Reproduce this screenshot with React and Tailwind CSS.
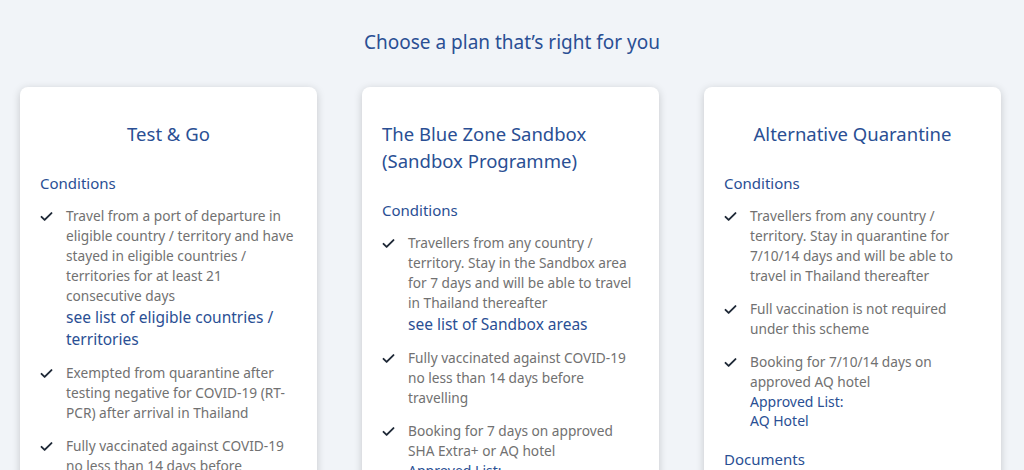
import React from "react";

const Check = () => (
  <svg viewBox="0 0 24 24" className="w-[15px] h-[15px] mt-[3px] shrink-0 -ml-[1px]" fill="none" stroke="#1f2937" strokeWidth="3" strokeLinecap="round" strokeLinejoin="round">
    <path d="M4 12.5l5 5L20 6.5" />
  </svg>
);

const Item = ({ children, link }) => (
  <li className="flex gap-[12px]">
    <Check />
    <div>
      <p className="text-[13.7px] leading-[20px] text-[#717171]">{children}</p>
      {link}
    </div>
  </li>
);

const Link = ({ children }) => (
  <a className="block text-[15.5px] leading-[22px] text-[#2a4f94]">{children}</a>
);

const Small = ({ children }) => (
  <a className="block text-[14px] leading-[19px] text-[#2a4f94]">{children}</a>
);

const Card = ({ title, left, children }) => (
  <div className="bg-white rounded-[8px] shadow-[0_2px_8px_rgba(0,0,0,0.18)] px-5 pt-[33px] pb-8 h-[420px]">
    <h3 className={`text-[18.5px] leading-[27px] text-[#2a4f94] ${left ? "text-left pr-10" : "text-center"}`}>{title}</h3>
    {children}
  </div>
);

const Heading = ({ children }) => (
  <h4 className="mt-[25px] text-[15px] leading-[22px] text-[#2a4f94]">{children}</h4>
);

export default function App() {
  return (
    <div className="w-[1024px] h-[470px] overflow-hidden bg-[#f1f4f8]" style={{ fontFamily: '"Noto Sans", "Open Sans", sans-serif' }}>
      <h2 className="pt-[30px] text-center text-[19px] leading-[24px] text-[#2a4f94]">Choose a plan that’s right for you</h2>
      <div className="grid grid-cols-3 gap-[45px] pl-5 pr-[23px] mt-[33px]">
        <Card title="Test & Go">
          <Heading>Conditions</Heading>
          <ul className="mt-[12px] flex flex-col gap-[13px]">
            <Item link={<Link>see list of eligible countries / territories</Link>}>
              Travel from a port of departure in eligible country / territory and have stayed in eligible countries / territories for at least 21 consecutive days
            </Item>
            <Item>Exempted from quarantine after testing negative for COVID-19 (RT-PCR) after arrival in Thailand</Item>
            <Item>Fully vaccinated against COVID-19 no less than 14 days before travelling</Item>
          </ul>
        </Card>
        <Card title="The Blue Zone Sandbox (Sandbox Programme)" left>
          <Heading>Conditions</Heading>
          <ul className="mt-[12px] flex flex-col gap-[13px]">
            <Item link={<Link>see list of Sandbox areas</Link>}>
              Travellers from any country / territory. Stay in the Sandbox area for 7 days and will be able to travel in Thailand thereafter
            </Item>
            <Item>Fully vaccinated against COVID-19 no less than 14 days before travelling</Item>
            <Item link={<Small>Approved List:</Small>}>
              Booking for 7 days on approved SHA Extra+ or AQ hotel
            </Item>
          </ul>
        </Card>
        <Card title="Alternative Quarantine">
          <Heading>Conditions</Heading>
          <ul className="mt-[12px] flex flex-col gap-[13px]">
            <Item>Travellers from any country / territory. Stay in quarantine for 7/10/14 days and will be able to travel in Thailand thereafter</Item>
            <Item>Full vaccination is not required under this scheme</Item>
            <Item link={<><Small>Approved List:</Small><Small>AQ Hotel</Small></>}>
              Booking for 7/10/14 days on approved AQ hotel
            </Item>
          </ul>
          <h4 className="mt-[18px] text-[15px] leading-[22px] text-[#2a4f94]">Documents</h4>
        </Card>
      </div>
    </div>
  );
}
